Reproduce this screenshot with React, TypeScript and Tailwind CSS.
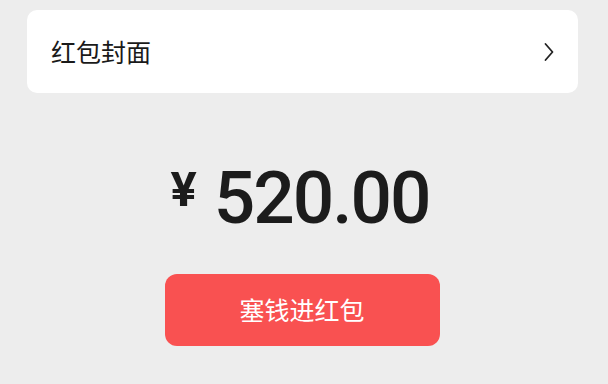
export default function App() {
  return (
    <div
      className="w-[608px] h-[384px] bg-[#ededed] overflow-hidden flex flex-col"
      style={{ fontFamily: '"Noto Sans CJK SC", "Noto Sans", sans-serif' }}
    >
      <div className="ml-[27px] mr-[30px] mt-[10px] h-[83px] rounded-[10px] bg-white flex items-center justify-between pl-[24px] pr-[24px]">
        <span className="text-[25px] text-[#1a1a1a] leading-none">红包封面</span>
        <svg width="10" height="20" viewBox="0 0 10 20" fill="none">
          <path d="M1.5 2 L8.5 10 L1.5 18" stroke="#222" strokeWidth="1.8" strokeLinecap="round" strokeLinejoin="round" />
        </svg>
      </div>

      <div className="mt-[69px] flex items-start justify-center gap-[17px] pr-[8px] text-[#1c1c1c]">
        <span className="text-[49px] font-bold leading-none mt-[3px]" style={{ fontFamily: 'Roboto, sans-serif' }}>¥</span>
        <span className="text-[73px] font-medium leading-none tracking-[-2px]" style={{ fontFamily: 'Roboto, sans-serif' }}>520.00</span>
      </div>

      <div className="mt-[39px] flex justify-center pr-[4px]">
        <button className="w-[275px] h-[72px] rounded-[12px] bg-[#f95151] text-white text-[25px] flex items-center justify-center">
          塞钱进红包
        </button>
      </div>
    </div>
  );
}
